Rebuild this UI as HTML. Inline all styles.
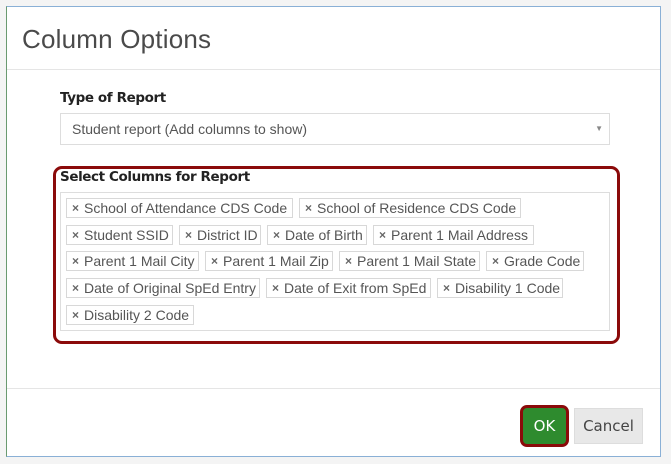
<!DOCTYPE html>
<html><head><style>
*{box-sizing:border-box;margin:0;padding:0}
body{width:671px;height:464px;background:#f4f4f4;position:relative;overflow:hidden;font-family:"Liberation Sans",sans-serif}
.modal{position:absolute;left:6px;top:6px;width:655px;height:451px;background:#fff;border:1px solid #8ab0d6;border-left-color:#6a9a70}
.a{position:absolute}
h1{position:absolute;left:22px;top:24px;font-size:26px;color:#4a4a4a;font-family:"Liberation Sans",sans-serif;font-weight:normal;letter-spacing:0.2px}
.lbl{font-weight:bold;font-size:13.5px;color:#222;font-family:"DejaVu Sans",sans-serif;letter-spacing:-0.4px}
.t{position:absolute;height:20px;border:1px solid #d8d8d8;background:#fff;font-size:14px;color:#555;line-height:18px;padding-left:17px;white-space:nowrap}
.t:before{content:"×";position:absolute;left:5px;top:0;font-size:12px;font-weight:bold;color:#666}
</style></head><body>
<div class="modal"></div>
<h1>Column Options</h1>
<div class="a" style="left:7px;top:69px;width:653px;height:1px;background:#e5e5e5"></div>
<div class="a lbl" style="left:60px;top:90px">Type of Report</div>
<div class="a" style="left:60px;top:113px;width:550px;height:32px;border:1px solid #ddd;font-size:14px;color:#555;line-height:30px;padding-left:11px">Student report (Add columns to show)<span style="position:absolute;right:6px;top:0;font-size:8px;color:#888">▼</span></div>
<div class="a" style="left:53px;top:166px;width:567px;height:178px;border:3px solid #8b0a0a;border-radius:9px"></div>
<div class="a lbl" style="left:60px;top:169px">Select Columns for Report</div>
<div class="a" style="left:60px;top:192px;width:550px;height:139px;border:1px solid #ddd"></div>
<div class="t" style="left:66px;top:198px;width:227px">School of Attendance CDS Code</div>
<div class="t" style="left:299px;top:198px;width:222px">School of Residence CDS Code</div>
<div class="t" style="left:66px;top:225px;width:107px">Student SSID</div>
<div class="t" style="left:179px;top:225px;width:82px">District ID</div>
<div class="t" style="left:267px;top:225px;width:100px">Date of Birth</div>
<div class="t" style="left:373px;top:225px;width:161px">Parent 1 Mail Address</div>
<div class="t" style="left:66px;top:251px;width:133px">Parent 1 Mail City</div>
<div class="t" style="left:205px;top:251px;width:128px">Parent 1 Mail Zip</div>
<div class="t" style="left:339px;top:251px;width:141px">Parent 1 Mail State</div>
<div class="t" style="left:486px;top:251px;width:98px">Grade Code</div>
<div class="t" style="left:66px;top:278px;width:194px">Date of Original SpEd Entry</div>
<div class="t" style="left:266px;top:278px;width:165px">Date of Exit from SpEd</div>
<div class="t" style="left:437px;top:278px;width:126px">Disability 1 Code</div>
<div class="t" style="left:66px;top:305px;width:128px">Disability 2 Code</div>
<div class="a" style="left:7px;top:388px;width:653px;height:1px;background:#e5e5e5"></div>
<div class="a" style="left:520px;top:405px;width:49px;height:42px;border:3px solid #8b0a0a;border-radius:7px;background:#2e8b2e;color:#fff;font-size:15px;text-align:center;line-height:36px;font-family:'DejaVu Sans',sans-serif">OK</div>
<div class="a" style="left:574px;top:408px;width:69px;height:36px;border:1px solid #ddd;background:#e8e8e8;color:#444;font-size:15px;text-align:center;line-height:34px;font-family:'DejaVu Sans',sans-serif">Cancel</div>
</body></html>
